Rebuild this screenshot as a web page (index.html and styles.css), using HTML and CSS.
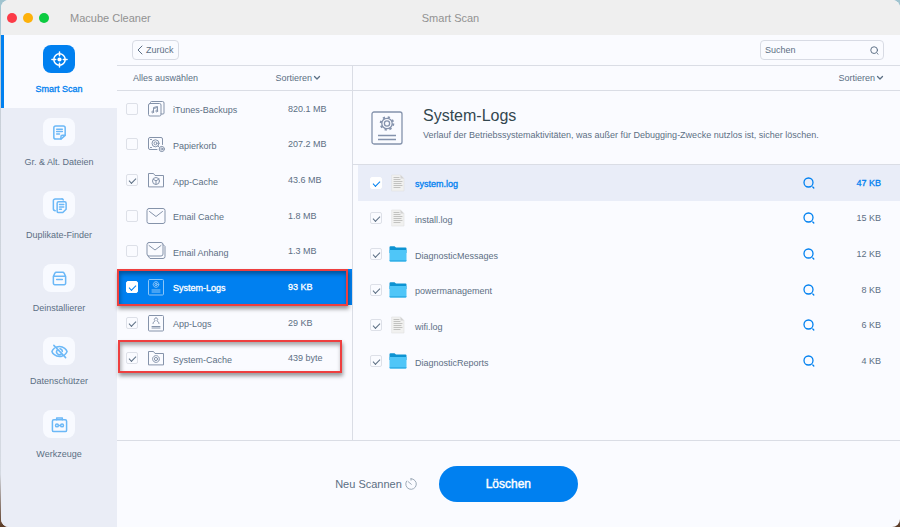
FILE: index.html
```
<!DOCTYPE html>
<html lang="de">
<head>
  <meta charset="UTF-8">
  <meta name="viewport" content="width=device-width, initial-scale=1.0">
  <title>Macube Cleaner</title>
  <link rel="stylesheet" href="styles.css">
</head>
<body>

<!-- Icons -->
<svg class="sprite" aria-hidden="true">
  <symbol id="i-music" viewBox="0 0 20 20">
    <rect x="2.5" y="4.5" width="12.5" height="12.5" rx="1.5"/>
    <path d="M4.5 4.5V3.5a1 1 0 0 1 1-1h11a1.5 1.5 0 0 1 1.5 1.5V14a1 1 0 0 1-1 1h-2"/>
    <path d="M7.5 13V8.500l4-1V12M7.500 9.500l4-1"/>
    <circle cx="6.700" cy="13" r=".9"/><circle cx="10.700" cy="12" r=".9"/>
  </symbol>
  <symbol id="i-trash" viewBox="0 0 20 20">
    <path d="M11 15.500H4A1.500 1.500 0 0 1 2.500 14V5A1.500 1.500 0 0 1 4 3.500h11A1.500 1.500 0 0 1 16.500 5v5.500"/>
    <circle cx="9.500" cy="9.300" r="3.500"/><circle cx="9.500" cy="9.300" r="1.500"/>
    <path d="M4.500 5.500h1M4.500 13.500h1M12 12l1 1"/>
    <circle cx="15.800" cy="15" r="2.600"/><circle cx="15.800" cy="15" r="1"/>
  </symbol>
  <symbol id="i-appcache" viewBox="0 0 20 20">
    <path d="M2.500 16.500v-13h5l1.500 2h8.500v11z"/>
    <circle cx="10" cy="11" r="3.500"/>
    <path d="M7.500 9.500l2.500 1.300 3-1.800M10 11v3"/>
  </symbol>
  <symbol id="i-mail" viewBox="0 0 20 20">
    <rect x="1" y="2.500" width="18" height="15" rx="2"/>
    <path d="M3.500 5.500l6.500 5 6.500-5"/>
  </symbol>
  <symbol id="i-mails" viewBox="0 0 20 20">
    <rect x="1" y="1.500" width="16" height="13.500" rx="2"/>
    <path d="M3 4.500l6 4.500 6-4.500M2 15l2 2.500H17a2 2 0 0 0 2-2V5.500l-2-2"/>
  </symbol>
  <symbol id="i-syslog" viewBox="0 0 20 20">
    <rect x="2.500" y="2.500" width="15" height="15.500" rx="1"/>
    <circle cx="10" cy="7.500" r="2.800" stroke-dasharray="1.500 .7"/><circle cx="10" cy="7.500" r="1.200"/>
    <path d="M6 13h8M6 15h8"/>
  </symbol>
  <symbol id="i-applog" viewBox="0 0 20 20">
    <rect x="2.500" y="2.500" width="15" height="15.500" rx="1"/>
    <path d="M7 10.500c0-2.500 2-1.500 2-2.800a1.600 1.600 0 1 1 2 0c0 1.300 2 .3 2 2.800M6 13.500h8M6 15h8"/>
  </symbol>
  <symbol id="i-syscache" viewBox="0 0 20 20">
    <path d="M2.500 16.500v-13h5l1.500 2h8.500v11z"/>
    <circle cx="10" cy="11" r="3.400" stroke-dasharray="1.800 .7"/><circle cx="10" cy="11" r="1.600"/>
  </symbol>
  <symbol id="i-search" viewBox="0 0 12 12">
    <circle cx="5.500" cy="5.500" r="4.500"/><path d="M9.800 10l1 1"/>
  </symbol>
  <symbol id="i-down" viewBox="0 0 8 8"><path d="M1.500 2.500L4 5l2.500-2.500"/></symbol>
  <symbol id="i-doc" viewBox="0 0 18 18">
    <path d="M3 1h8.500L15 4.500V17H3z" fill="#f1f1f0" stroke="#e0e0e0" stroke-width=".6"/>
    <path d="M11.500 1v3.500H15z" fill="#d2d2d2" stroke="none"/>
    <path d="M5 3.500h5M5 5.500h6M5 7.500h8M5 9.500h7M5 11.500h8M5 13.500h6" stroke="#c2c2c0" stroke-width="1.200"/>
  </symbol>
  <symbol id="i-folder" viewBox="0 0 18 18">
    <path d="M.5 2.200A1 1 0 0 1 1.500 1.200h4l1.500 1.300h9.500a1 1 0 0 1 1 1V8H.5z" fill="#0d93d2" stroke="none"/>
    <path d="M.5 5h17v10.500a1 1 0 0 1-1 1h-15a1 1 0 0 1-1-1z" fill="#4fc6f8" stroke="none"/>
    <path d="M.5 15.200h17v.3a1 1 0 0 1-1 1h-15a1 1 0 0 1-1-1z" fill="#2ba9e2" stroke="none"/>
  </symbol>
</svg>

<div class="window">
  <header class="titlebar">
    <div class="lights"><i class="red"></i><i class="yellow"></i><i class="green"></i></div>
    <span class="app-name">Macube Cleaner</span>
    <h1>Smart Scan</h1>
  </header>

  <div class="content">
    <nav class="sidebar">
      <a class="nav-item active" href="#scan">
        <span class="tile"><svg viewBox="0 0 18 18"><circle cx="9" cy="9" r="6"/><circle cx="9" cy="9" r="2.200" fill="currentColor" stroke="none"/><path d="M9 1v4M9 13v4M1 9h4M13 9h4"/></svg></span>
        Smart Scan
      </a>
      <a class="nav-item" href="#large">
        <span class="tile"><svg viewBox="0 0 18 18"><path d="M10.500 16H5a2 2 0 0 1-2-2V4a2 2 0 0 1 2-2h8a2 2 0 0 1 2 2v8z"/><path d="M10.500 16v-2.500a1.500 1.500 0 0 1 1.500-1.500h3M6 5.500h6M6 8h6M6 10.500h3"/></svg></span>
        Gr. &amp; Alt. Dateien
      </a>
      <a class="nav-item" href="#duplicates">
        <span class="tile"><svg viewBox="0 0 18 18"><path d="M12.500 16.500H8a1.500 1.500 0 0 1-1.500-1.500V6.500A1.500 1.500 0 0 1 8 5h6.500A1.500 1.500 0 0 1 16 6.500V13z"/><path d="M9 8h4.500M9 10.500h4.500M9 13h2M4.500 14.500a2 2 0 0 1-2-2V4a2 2 0 0 1 2-2H11a2 2 0 0 1 2 1"/></svg></span>
        Duplikate-Finder
      </a>
      <a class="nav-item" href="#uninstall">
        <span class="tile"><svg viewBox="0 0 18 18"><path d="M2.500 7l1.500-3.500A2 2 0 0 1 6 2.500h6a2 2 0 0 1 2 1L15.500 7v7a1.500 1.500 0 0 1-1.500 1.500H4A1.500 1.500 0 0 1 2.500 14zM2.500 6.500h13M6 10h6"/></svg></span>
        Deinstallierer
      </a>
      <a class="nav-item" href="#privacy">
        <span class="tile"><svg viewBox="0 0 18 18"><path d="M6 4.300A8 8 0 0 1 9 3.700c4.500 0 7.500 3.300 8 5.300-.3 1-1.200 2.300-2.500 3.400M12 13.700a8 8 0 0 1-3 .6c-4.500 0-7.500-3.300-8-5.300.3-1 1.200-2.300 2.500-3.400M3 2.500l12.500 13M6.500 7.500a3 3 0 0 0 4.200 4.200M9.500 6a3 3 0 0 1 2.500 3"/></svg></span>
        Datenschützer
      </a>
      <a class="nav-item" href="#tools">
        <span class="tile"><svg viewBox="0 0 18 18"><rect x="1.500" y="4" width="15" height="12.500" rx="1.500"/><path d="M6 4V2h6v2M8 10h2"/><circle cx="6.300" cy="10" r="1.500"/><circle cx="11.700" cy="10" r="1.500"/></svg></span>
        Werkzeuge
      </a>
    </nav>

    <main class="main">
      <div class="toolbar">
        <button class="back" type="button"><svg viewBox="0 0 6 10"><path d="M5 1L1 5l4 4"/></svg>Zurück</button>
        <div class="search">
          <input type="text" placeholder="Suchen" aria-label="Suchen">
          <svg><use href="#i-search"/></svg>
        </div>
      </div>

      <div class="panes">
        <section class="categories">
          <div class="pane-head">
            <button type="button">Alles auswählen</button>
            <button class="sort" type="button">Sortieren<svg><use href="#i-down"/></svg></button>
          </div>
          <ul class="category-list">
            <li><input type="checkbox" id="c1"><svg><use href="#i-music"/></svg><label for="c1">iTunes-Backups</label><span class="size">820.1 MB</span></li>
            <li><input type="checkbox" id="c2"><svg><use href="#i-trash"/></svg><label for="c2">Papierkorb</label><span class="size">207.2 MB</span></li>
            <li><input type="checkbox" id="c3" checked><svg><use href="#i-appcache"/></svg><label for="c3">App-Cache</label><span class="size">43.6 MB</span></li>
            <li><input type="checkbox" id="c4"><svg><use href="#i-mail"/></svg><label for="c4">Email Cache</label><span class="size">1.8 MB</span></li>
            <li><input type="checkbox" id="c5"><svg><use href="#i-mails"/></svg><label for="c5">Email Anhang</label><span class="size">1.3 MB</span></li>
            <li class="selected marked"><input type="checkbox" id="c6" checked><svg><use href="#i-syslog"/></svg><label for="c6">System-Logs</label><span class="size">93 KB</span></li>
            <li><input type="checkbox" id="c7" checked><svg><use href="#i-applog"/></svg><label for="c7">App-Logs</label><span class="size">29 KB</span></li>
            <li class="marked short"><input type="checkbox" id="c8" checked><svg><use href="#i-syscache"/></svg><label for="c8">System-Cache</label><span class="size">439 byte</span></li>
          </ul>
        </section>

        <section class="details">
          <div class="pane-head">
            <button class="sort" type="button">Sortieren<svg><use href="#i-down"/></svg></button>
          </div>
          <div class="summary">
            <svg viewBox="0 0 32 34">
              <rect x="1" y="1" width="30" height="32" rx="2"/>
              <circle cx="16" cy="12.500" r="5.200"/><circle cx="16" cy="12.500" r="2.600"/>
              <circle cx="16" cy="12.500" r="6.300" stroke-width="2" stroke-dasharray="2.200 2.748"/>
              <path d="M7 24.500h18M7 28.500h18"/>
            </svg>
            <div>
              <h2>System-Logs</h2>
              <p>Verlauf der Betriebssystemaktivitäten, was außer für Debugging-Zwecke nutzlos ist, sicher löschen.</p>
            </div>
          </div>
          <ul class="file-list">
            <li class="selected"><input type="checkbox" id="f1" checked><svg><use href="#i-doc"/></svg><label for="f1">system.log</label><button type="button" aria-label="Anzeigen"><svg><use href="#i-search"/></svg></button><span class="size">47 KB</span></li>
            <li><input type="checkbox" id="f2" checked><svg><use href="#i-doc"/></svg><label for="f2">install.log</label><button type="button" aria-label="Anzeigen"><svg><use href="#i-search"/></svg></button><span class="size">15 KB</span></li>
            <li><input type="checkbox" id="f3" checked><svg><use href="#i-folder"/></svg><label for="f3">DiagnosticMessages</label><button type="button" aria-label="Anzeigen"><svg><use href="#i-search"/></svg></button><span class="size">12 KB</span></li>
            <li><input type="checkbox" id="f4" checked><svg><use href="#i-folder"/></svg><label for="f4">powermanagement</label><button type="button" aria-label="Anzeigen"><svg><use href="#i-search"/></svg></button><span class="size">8 KB</span></li>
            <li><input type="checkbox" id="f5" checked><svg><use href="#i-doc"/></svg><label for="f5">wifi.log</label><button type="button" aria-label="Anzeigen"><svg><use href="#i-search"/></svg></button><span class="size">6 KB</span></li>
            <li><input type="checkbox" id="f6" checked><svg><use href="#i-folder"/></svg><label for="f6">DiagnosticReports</label><button type="button" aria-label="Anzeigen"><svg><use href="#i-search"/></svg></button><span class="size">4 KB</span></li>
          </ul>
        </section>
      </div>

      <footer class="actions">
        <button class="rescan" type="button">Neu Scannen<svg viewBox="0 0 12 12"><path d="M6 .7A5.300 5.300 0 1 1 1.500 3.200M6 .7v1.500M6.300 6.300L3 3.500"/></svg></button>
        <button class="delete" type="button">Löschen</button>
      </footer>
    </main>
  </div>
</div>

</body>
</html>
```

FILE: styles.css
```
* {
  box-sizing: border-box;
}

body {
  margin: 0;
  font-family: "Liberation Sans", Arial, sans-serif;
  font-size: 9px;
  line-height: 12px;
  color: #5c6f84;
  background: linear-gradient(#9fc3cf, #c9d0d8 20%, #d5dae2 90%, #5b3a25);
}

button {
  font: inherit;
  color: inherit;
  background: none;
  border: none;
  padding: 0;
  cursor: pointer;
}

svg {
  flex: none;
  fill: none;
  stroke: currentColor;
  stroke-linecap: round;
  stroke-linejoin: round;
}

ul {
  list-style: none;
  margin: 0;
  padding: 0;
}

.sprite {
  display: none;
}

.window {
  display: flex;
  flex-direction: column;
  min-height: 100vh;
  margin-left: 1px;
  border-radius: 8px;
  overflow: hidden;
  background: #fafbff;
}

/* Title bar */
.titlebar {
  display: grid;
  grid-template-columns: 69px 1fr auto 1fr 69px;
  align-items: center;
  height: 35px;
  background: #efefef;
  color: #929292;
  font-size: 11px;
}

.titlebar h1 {
  margin: 0;
  font-size: 11px;
  font-weight: normal;
}

.lights {
  display: flex;
  gap: 6px;
  padding-left: 6px;
}

.lights i {
  width: 10px;
  height: 10px;
  border-radius: 50%;
}

.red { background: #fc3b47; }
.yellow { background: #fdb10a; }
.green { background: #0ccb40; }

.content {
  display: flex;
  flex: 1;
}

/* Sidebar */
.sidebar {
  width: 116px;
  flex: none;
  background: #eaedf6;
}

.nav-item {
  display: flex;
  flex-direction: column;
  align-items: center;
  gap: 10px;
  height: 73px;
  padding-top: 10px;
  color: inherit;
  text-decoration: none;
}

.nav-item.active {
  color: #0080f0;
  background: #fafbff;
  box-shadow: inset 3px 0 #0080f0;
  -webkit-text-stroke: 0.3px;
}

.tile {
  display: grid;
  place-items: center;
  width: 32px;
  height: 28px;
  border-radius: 8px;
  background: #f8faff;
  color: #6bb8f7;
}

.tile svg {
  width: 17px;
  height: 17px;
  stroke-width: 1.6;
}

.active .tile {
  background: #0080f0;
  color: #fff;
}

/* Toolbar */
.main {
  display: flex;
  flex-direction: column;
  flex: 1;
  min-width: 0;
}

.toolbar {
  display: flex;
  justify-content: space-between;
  align-items: center;
  height: 31px;
  padding: 0 16px 0 15px;
  border-bottom: 1px solid #dadde5;
}

.back,
.search {
  display: flex;
  align-items: center;
  height: 20px;
  border: 1px solid #d8dbe4;
  border-radius: 4px;
}

.back {
  gap: 3px;
  padding: 0 4px;
}

.back svg {
  width: 6px;
  height: 10px;
}

.search {
  width: 124px;
  padding: 0 4px;
}

.search input {
  flex: 1;
  min-width: 0;
  padding: 0;
  border: none;
  outline: none;
  background: none;
  font: inherit;
  color: inherit;
}

.search input::placeholder {
  color: inherit;
  opacity: 1;
}

.search svg {
  width: 9px;
  height: 9px;
  stroke-width: 1.3;
}

/* Panes */
.panes {
  display: flex;
  flex: 1;
  border-bottom: 1px solid #dadde5;
}

.pane-head {
  display: flex;
  justify-content: space-between;
  height: 25px;
  padding: 0 16px;
  border-bottom: 1px solid #dadde5;
}

.sort {
  display: flex;
  align-items: center;
  gap: 1px;
  margin-left: auto;
}

.sort svg {
  width: 8px;
  height: 8px;
  stroke-width: 1.3;
}

.categories {
  width: 236px;
  flex: none;
  border-right: 1px solid #dadde5;
}

.categories .pane-head {
  padding-right: 31px;
}

.details {
  flex: 1;
  min-width: 0;
}

input[type="checkbox"] {
  appearance: none;
  display: grid;
  place-items: center;
  flex: none;
  width: 12px;
  height: 12px;
  margin: 0;
  border: 1px solid #dde0e8;
  border-radius: 2px;
  color: #5c6f84;
}

input[type="checkbox"]:checked::before {
  content: "";
  width: 6px;
  height: 3px;
  border: solid currentColor;
  border-width: 0 0 1px 1px;
  transform: rotate(-45deg);
}

.category-list,
.file-list {
  display: grid;
}

.category-list {
  grid-template-rows: repeat(8, 1fr);
  min-height: 285px;
}

.file-list {
  grid-template-rows: repeat(6, 1fr);
  min-height: 214px;
}

.category-list li,
.file-list li {
  display: flex;
  align-items: center;
}

.category-list li {
  position: relative;
  padding-left: 9px;
}

.category-list svg {
  width: 20px;
  height: 20px;
  margin: 0 7px 0 8px;
  stroke: #8593aa;
}

li label {
  flex: 1;
  padding-top: 3px;
}

.category-list .size {
  width: 64px;
}

.category-list .selected {
  background: #0080f0;
  color: #fff;
  -webkit-text-stroke: 0.3px;
}

.category-list .selected input {
  background: #fff;
  border-color: #fff;
  color: #0080f0;
}

.category-list .selected svg {
  stroke: #8cc6f8;
}

/* Red frames round the marked rows */
.marked::after {
  content: "";
  position: absolute;
  inset: 0 4px -1px 0;
  border: 2px solid #ee3f3f;
  box-shadow: 1px 3px 4px rgba(0, 0, 0, 0.4), inset 1px 3px 4px rgba(0, 0, 0, 0.35);
  pointer-events: none;
}

.marked.short::after {
  inset: 0 10px 3px 1px;
}

/* Details */
.summary {
  display: flex;
  align-items: center;
  gap: 20px;
  height: 74px;
  padding-left: 18px;
  border-bottom: 1px solid #dadde5;
}

.summary svg {
  width: 32px;
  height: 34px;
  stroke: #8492ac;
  stroke-width: 1.3;
  stroke-linecap: butt;
}

.summary h2 {
  margin: 0 0 4px;
  font-size: 16px;
  line-height: 18px;
  font-weight: normal;
  color: #33474f;
}

.summary p {
  margin: 0 0 8px;
}

.file-list li {
  margin-left: 5px;
  padding: 0 19px 0 12px;
}

.file-list li > svg {
  width: 18px;
  height: 18px;
  margin: 0 8px 0 7px;
}

.file-list button {
  display: grid;
  color: #0080f0;
}

.file-list button svg {
  width: 12px;
  height: 12px;
  stroke-width: 1.3;
}

.file-list .size {
  width: 66px;
  text-align: right;
}

.file-list .selected {
  background: #e9edf8;
  color: #0080f0;
  -webkit-text-stroke: 0.3px;
}

.file-list .selected input {
  background: #fff;
  border-color: #fff;
  color: #0080f0;
}

/* Bottom actions */
.actions {
  display: flex;
  justify-content: center;
  align-items: center;
  gap: 22px;
  height: 86px;
  padding-right: 104px;
}

.rescan {
  display: flex;
  align-items: center;
  gap: 3px;
  font-size: 11px;
}

.rescan svg {
  width: 12px;
  height: 12px;
  stroke: #93a2b0;
  stroke-width: 0.9;
}

.delete {
  width: 139px;
  height: 36px;
  border-radius: 18px;
  background: #0080f0;
  color: #fff;
  font-size: 12px;
  -webkit-text-stroke: 0.4px;
}
```
